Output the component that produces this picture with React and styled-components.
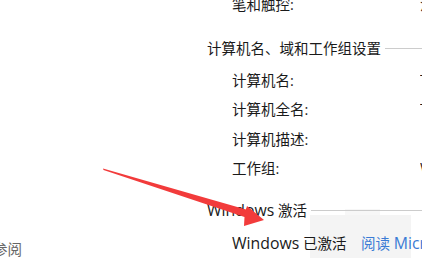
import styled, { createGlobalStyle } from "styled-components";

const GlobalStyle = createGlobalStyle`
  html, body {
    margin: 0;
    padding: 0;
    background: #ffffff;
    overflow: hidden;
  }
  body {
    font-family: "Open Sans", "Noto Sans CJK SC", sans-serif;
  }
`;

const Page = styled.div`
  position: relative;
  width: 445px;
  height: 258px;
  overflow: hidden;
  background: #fff;
  display: flex;
`;

const SideBar = styled.div`
  flex: 0 0 207px;
  display: flex;
  flex-direction: column;
  justify-content: flex-end;
`;

const SideLink = styled.div`
  margin-left: -7px;
  font-size: 14.5px;
  line-height: 20px;
  color: #666;
  margin-bottom: -2px;
`;

const Main = styled.div`
  position: relative;
  z-index: 1;
  flex: 0 0 215px;
  min-width: 0;
  overflow: hidden;
  margin-top: -11px;
  display: flex;
  flex-direction: column;
  font-size: 14.5px;
  color: #1a1a1a;
`;

const Header = styled.div`
  display: flex;
  align-items: center;
  gap: 4px;
  height: 30px;
  margin-top: ${(p) => p.$top}px;
  white-space: nowrap;
`;

const Rule = styled.div`
  flex: 1;
  height: 1px;
  background: #cccccc;
  margin-top: 2px;
`;

const Row = styled.div`
  display: flex;
  height: 30px;
  align-items: center;
  padding-left: 25px;
  margin-top: ${(p) => p.$top || 0}px;
  white-space: nowrap;
`;

const Label = styled.span`
  flex: 0 0 ${(p) => p.$w || 188}px;
`;

const Latin = styled.span`
  font-size: 15.8px;
`;

const Value = styled.span`
  flex: 0 0 2px;
  overflow: hidden;
`;

const Link = styled.span`
  flex: 0 0 61px;
  overflow: hidden;
  color: #3a7bd5;
`;

const Blot = styled.div`
  position: absolute;
  left: 310px;
  top: 215px;
  width: 101px;
  height: 43px;
  background: #f4f4f4;
  z-index: 0;

  &::before {
    content: "";
    position: absolute;
    left: 35px;
    top: -6px;
    width: 35px;
    height: 6px;
    background: #f7f7f7;
  }
`;

const Arrow = styled.svg`
  position: absolute;
  left: 0;
  top: 0;
  z-index: 2;
  pointer-events: none;
`;

export default function App() {
  return (
    <>
      <GlobalStyle />
      <Page>
        <SideBar>
          <SideLink>参阅</SideLink>
        </SideBar>
        <Main>
          <Row>
            <Label>笔和触控:</Label>
            <Value>没有可用于此显示器的笔或触控输入</Value>
          </Row>
          <Header $top={14}>
            计算机名、域和工作组设置
            <Rule />
          </Header>
          <Row $top={2}>
            <Label>计算机名:</Label>
            <Value>TH-PC</Value>
          </Row>
          <Row>
            <Label>计算机全名:</Label>
            <Value>TH-PC</Value>
          </Row>
          <Row>
            <Label>计算机描述:</Label>
            <Value></Value>
          </Row>
          <Row>
            <Label>工作组:</Label>
            <Value>WORKGROUP</Value>
          </Row>
          <Header $top={12}>
            <span>
              <Latin>Windows</Latin> 激活
            </span>
            <Rule />
          </Header>
          <Row $top={4}>
            <Label $w={129}>
              <Latin>Windows</Latin> 已激活
            </Label>
            <Link>
              阅读 <Latin>Microsoft</Latin> 软件许可条款
            </Link>
          </Row>
        </Main>
        <Blot />
        <Arrow width="445" height="258" viewBox="0 0 445 258">
          <polygon
            points="103,168.5 246,209.5 247,206 264,220 244,226 244.5,217 103.5,170"
            fill="#f23b3b"
          />
        </Arrow>
      </Page>
    </>
  );
}
